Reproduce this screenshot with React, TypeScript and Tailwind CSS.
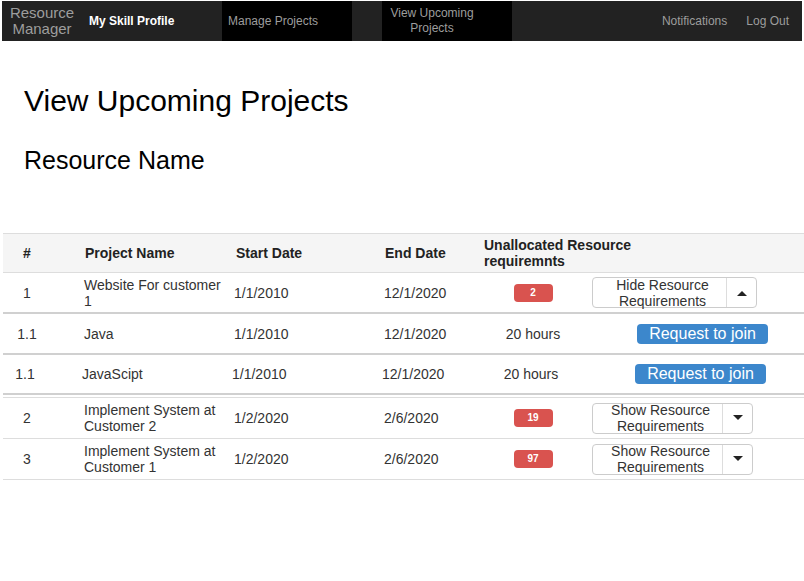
import React from 'react';

type Row = {
  num: string;
  name: string;
  start: string;
  end: string;
  badge?: string;
  hours?: string;
  toggle?: 'show' | 'hide';
  sub?: boolean;
  shift?: boolean;
  border: string;
  height: string;
};

const rows: Row[] = [
  { num: '1', name: 'Website For customer 1', start: '1/1/2010', end: '12/1/2020', badge: '2', toggle: 'hide', border: 'border-b-2 border-[#d0d0d0]', height: 'h-[41px]' },
  { num: '1.1', name: 'Java', start: '1/1/2010', end: '12/1/2020', hours: '20 hours', sub: true, border: 'border-b-2 border-[#d0d0d0]', height: 'h-[41px]' },
  { num: '1.1', name: 'JavaScipt', start: '1/1/2010', end: '12/1/2020', hours: '20 hours', sub: true, shift: true, border: 'border-b-2 border-[#d0d0d0]', height: 'h-[40px]' },
  { num: '2', name: 'Implement System at Customer 2', start: '1/2/2020', end: '2/6/2020', badge: '19', toggle: 'show', border: 'border-b border-[#ddd]', height: 'h-[41px]' },
  { num: '3', name: 'Implement System at Customer 1', start: '1/2/2020', end: '2/6/2020', badge: '97', toggle: 'show', border: 'border-b border-[#ddd]', height: 'h-[41px]' },
];

const Caret = ({ up }: { up?: boolean }) => (
  <svg width="10" height="6" viewBox="0 0 10 6">
    {up ? <path d="M0 6 L5 1 L10 6 Z" fill="#222" /> : <path d="M0 0 L10 0 L5 5 Z" fill="#222" />}
  </svg>
);

const TableRow = ({ row }: { row: Row }) => (
  <div className={`${row.height} ${row.border} flex items-center text-[14px] leading-[16px] text-[#333]`}>
    <div className={`flex items-center w-full ${row.shift ? '-ml-[2px]' : ''}`}>
      <div className="w-[48px] text-center">{row.num}</div>
      <div className="w-[177px] pl-[33px] pr-[4px]">{row.name}</div>
      <div className="w-[150px] pl-[6px]">{row.start}</div>
      <div className="w-[100px] pl-[6px]">{row.end}</div>
      <div className="w-[110px] flex justify-center">
        {row.badge && (
          <span className="w-[39px] h-[18px] rounded-[4px] bg-[#d9534f] text-white text-[10px] font-bold flex items-center justify-center">
            {row.badge}
          </span>
        )}
        {row.hours && <span>{row.hours}</span>}
      </div>
      <div className="flex-1 pl-[4px]">
        {row.toggle && (
          <div className={`flex h-[31px] border border-[#ccc] rounded-[4px] bg-white ${row.toggle === 'hide' ? 'w-[165px]' : 'w-[161px]'}`}>
            <div className="flex-1 flex items-center justify-center text-center leading-[16px] pl-[6px]">
              {row.toggle === 'hide' ? 'Hide' : 'Show'} Resource
              <br />
              Requirements
            </div>
            <div className="w-[30px] border-l border-[#ddd] flex items-center justify-center">
              <Caret up={row.toggle === 'hide'} />
            </div>
          </div>
        )}
        {row.sub && (
          <button className="ml-[45px] w-[131px] h-[20px] rounded-[4px] bg-[#3c87cc] text-white text-[16px] leading-[20px]">
            Request to join
          </button>
        )}
      </div>
    </div>
  </div>
);

export default function App() {
  return (
    <div className="min-h-[581px] bg-white" style={{ fontFamily: '"Liberation Sans", Arial, sans-serif' }}>
      <nav className="mx-[2px] mt-px h-[40px] bg-[#222] flex items-stretch text-[12px] text-[#9d9d9d]">
        <div className="w-[80px] flex items-center justify-center text-center text-[15px] leading-[16px]">
          Resource
          <br />
          Manager
        </div>
        <div className="w-[120px] flex items-center pl-[7px] text-white font-bold">My Skill Profile</div>
        <div className="w-[20px]" />
        <div className="w-[130px] bg-black flex items-center pl-[6px]">Manage Projects</div>
        <div className="w-[30px]" />
        <div className="w-[130px] bg-black flex items-center">
          <div className="w-[100px] text-center leading-[15px]">
            View Upcoming
            <br />
            Projects
          </div>
        </div>
        <div className="flex-1" />
        <div className="flex items-center gap-[19px] pr-[13px]">
          <span>Notifications</span>
          <span>Log Out</span>
        </div>
      </nav>

      <div className="pl-[24px] text-[#000]">
        <h1 className="mt-[43px] text-[30px] leading-[34px]">View Upcoming Projects</h1>
        <h2 className="mt-[28px] text-[25px] leading-[29px]">Resource Name</h2>
      </div>

      <div className="ml-[3px] w-[801px] mt-[58px]">
        <div className="h-[40px] border-t border-b border-[#ddd] bg-[#f5f5f5] flex items-center text-[14px] leading-[16px] font-bold text-[#222]">
          <div className="w-[48px] text-center">#</div>
          <div className="w-[177px] pl-[34px]">Project Name</div>
          <div className="w-[150px] pl-[8px]">Start Date</div>
          <div className="w-[100px] pl-[7px]">End Date</div>
          <div className="w-[160px] pl-[6px]">Unallocated Resource requiremnts</div>
        </div>
        {rows.map((row, i) => (
          <React.Fragment key={i}>
            <TableRow row={row} />
            {i === 2 && <div className="h-[3px] border-b border-[#ddd]" />}
          </React.Fragment>
        ))}
      </div>
    </div>
  );
}
